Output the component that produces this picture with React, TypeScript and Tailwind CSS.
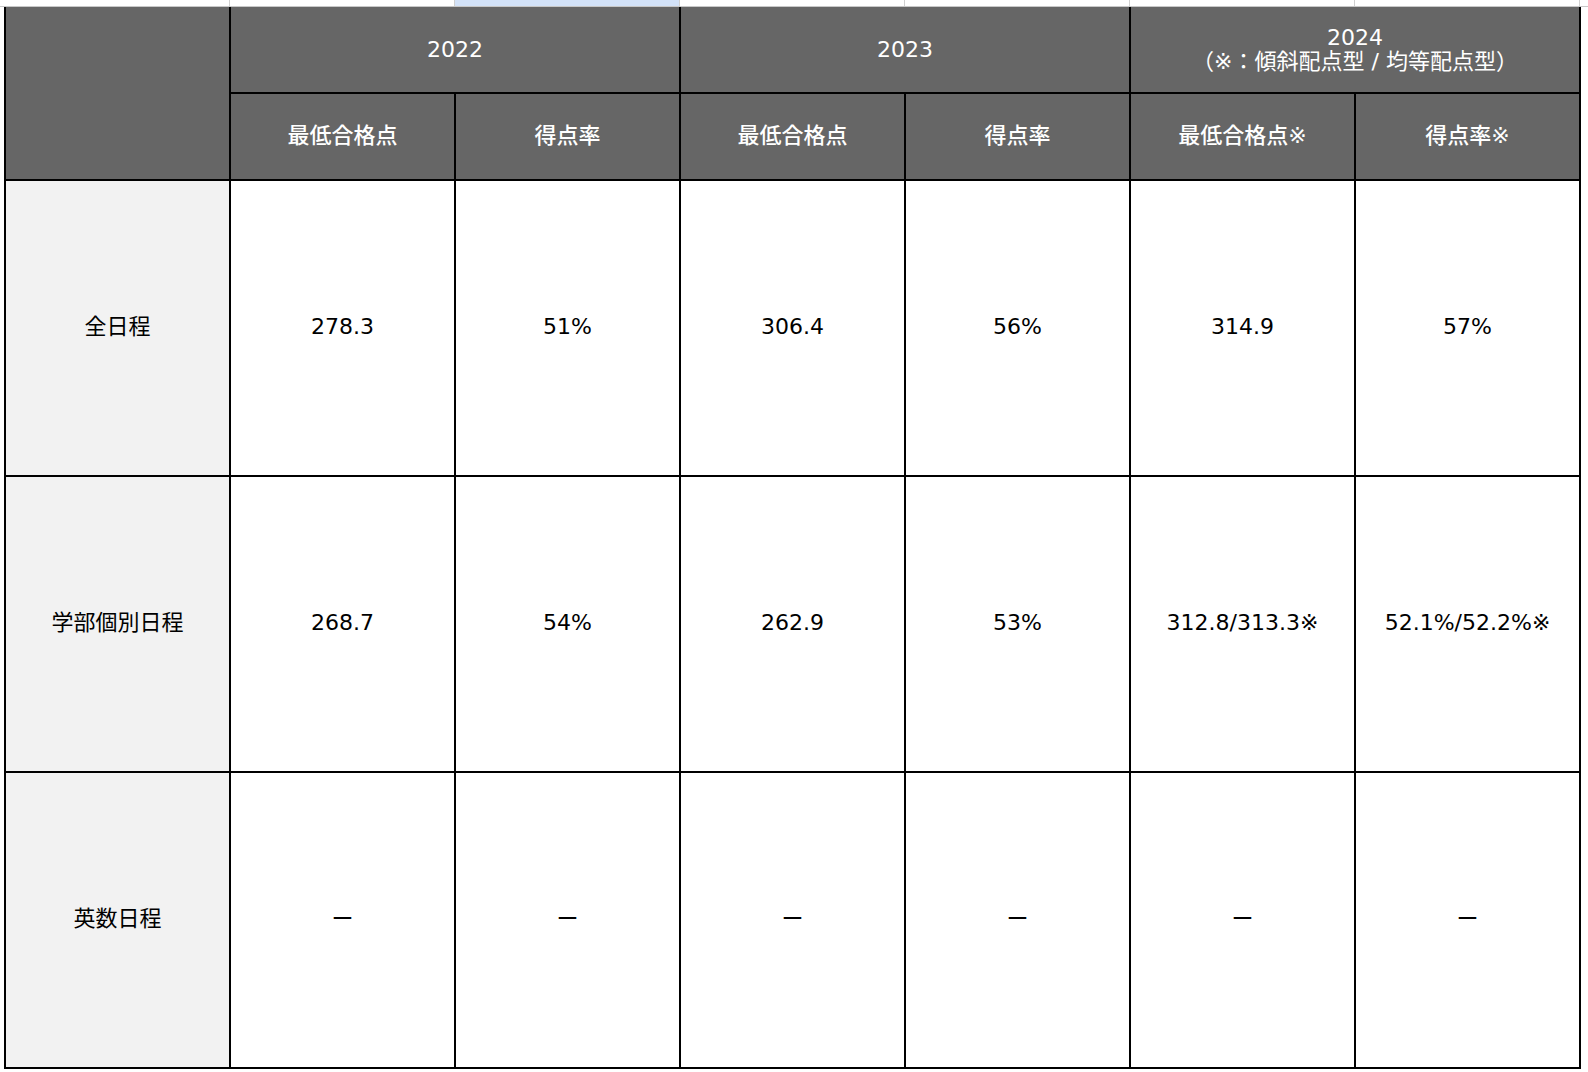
import React from "react";

const FONT = "font-['DejaVu_Sans','Noto_Sans_CJK_JP',sans-serif]";

const rows: { label: string; vals: string[] }[] = [
  { label: "全日程", vals: ["278.3", "51%", "306.4", "56%", "314.9", "57%"] },
  {
    label: "学部個別日程",
    vals: ["268.7", "54%", "262.9", "53%", "312.8/313.3※", "52.1%/52.2%※"],
  },
  { label: "英数日程", vals: ["ー", "ー", "ー", "ー", "ー", "ー"] },
];

export default function App() {
  return (
    <div className={`w-[1588px] h-[1072px] bg-white overflow-hidden ${FONT}`}>
      {/* spreadsheet strip */}
      <div className="h-[7px] border-b border-[#c8c8c8] flex">
        <div className="w-[230px] h-full border-r border-[#d0d0d0]" />
        <div className="w-[225px] h-full border-r border-[#d0d0d0]" />
        <div className="w-[225px] h-full border-r border-[#d0d0d0] bg-[#d3e2f8]" />
        <div className="w-[225px] h-full border-r border-[#d0d0d0]" />
        <div className="w-[225px] h-full border-r border-[#d0d0d0]" />
        <div className="w-[225px] h-full border-r border-[#d0d0d0]" />
        <div className="w-[225px] h-full border-r border-[#d0d0d0]" />
      </div>
      <div className="pl-[4px]">
        <div className="inline-grid grid-cols-[repeat(7,223px)] grid-rows-[85px_85px_294px_294px_294px] gap-[2px] bg-black px-[2px] pb-[2px] text-[22px]">
          <div className="row-span-2 bg-[#666666]" />
          <div className="col-span-2 bg-[#666666] text-white flex items-center justify-center">
            2022
          </div>
          <div className="col-span-2 bg-[#666666] text-white flex items-center justify-center">
            2023
          </div>
          <div className="col-span-2 bg-[#666666] text-white flex flex-col items-center justify-center leading-[24px]">
            <div>2024</div>
            <div>（※：傾斜配点型 / 均等配点型）</div>
          </div>
          {["最低合格点", "得点率", "最低合格点", "得点率", "最低合格点※", "得点率※"].map(
            (h, i) => (
              <div
                key={i}
                className="bg-[#666666] text-white font-medium pb-[3px] flex items-center justify-center"
              >
                {h}
              </div>
            )
          )}
          {rows.map((r) => (
            <React.Fragment key={r.label}>
              <div className="bg-[#f2f2f2] text-black pb-[4px] flex items-center justify-center">
                {r.label}
              </div>
              {r.vals.map((v, i) => (
                <div
                  key={i}
                  className="bg-white text-black pb-[4px] flex items-center justify-center"
                >
                  {v}
                </div>
              ))}
            </React.Fragment>
          ))}
        </div>
      </div>
    </div>
  );
}
